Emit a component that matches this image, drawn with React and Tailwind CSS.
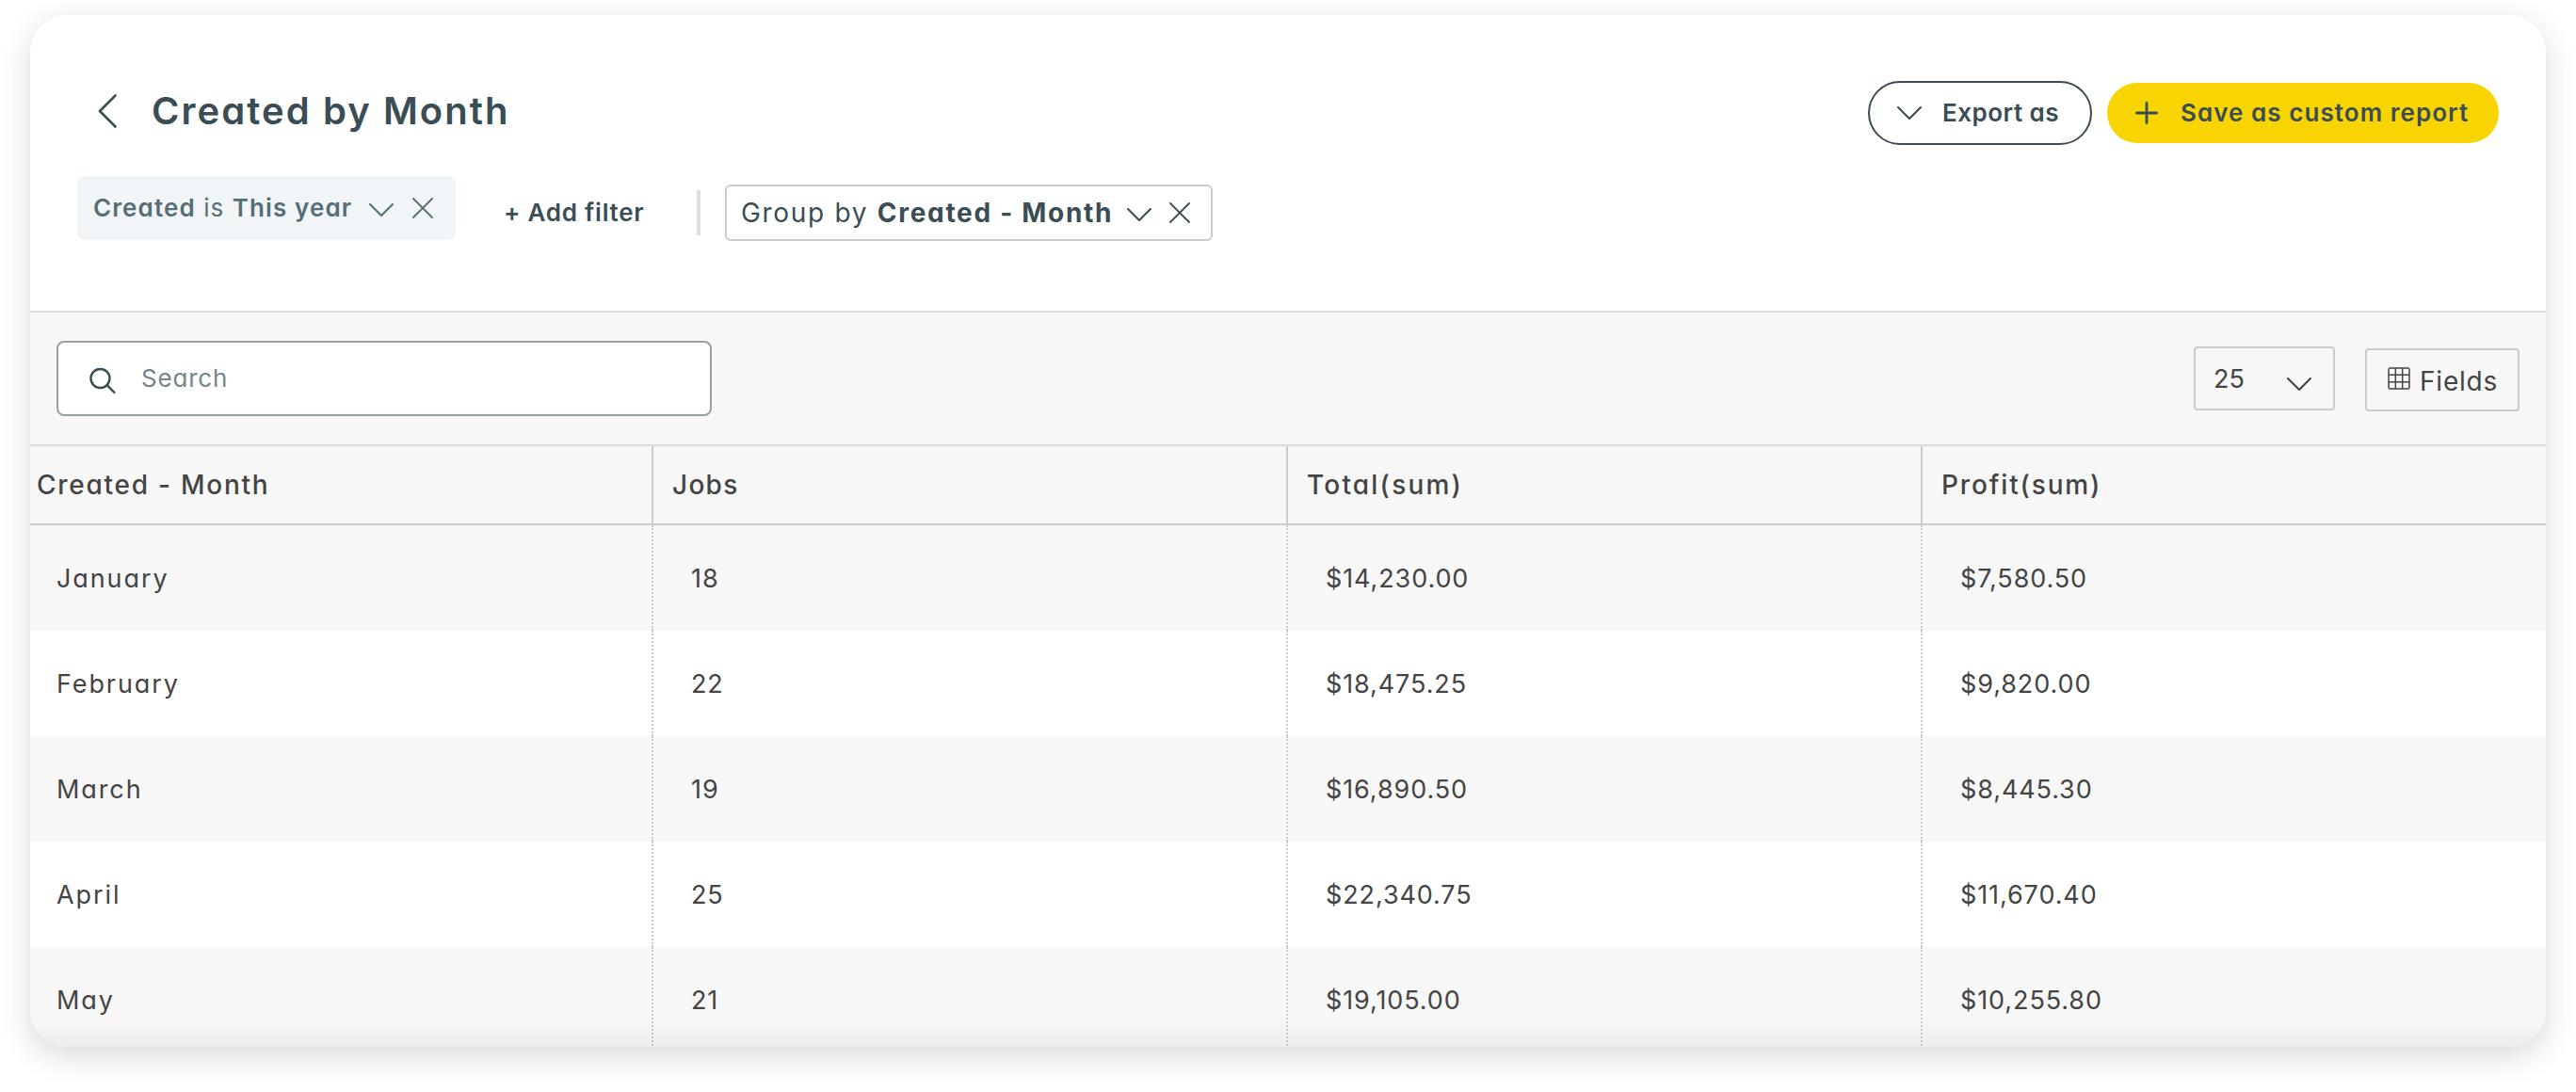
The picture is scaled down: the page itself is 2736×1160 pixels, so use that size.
const rows = [
    { month: 'January', jobs: '18', total: '$14,230.00', profit: '$7,580.50' },
    { month: 'February', jobs: '22', total: '$18,475.25', profit: '$9,820.00' },
    { month: 'March', jobs: '19', total: '$16,890.50', profit: '$8,445.30' },
    { month: 'April', jobs: '25', total: '$22,340.75', profit: '$11,670.40' },
    { month: 'May', jobs: '21', total: '$19,105.00', profit: '$10,255.80' },
];

function ChevronDown({ className }) {
    return (
        <svg viewBox="0 0 28 16" className={className} fill="none" stroke="currentColor" strokeWidth="2" strokeLinecap="round" strokeLinejoin="round">
            <path d="M2 2l12 12L26 2" />
        </svg>
    );
}

function Close({ className }) {
    return (
        <svg viewBox="0 0 22 22" className={className} fill="none" stroke="currentColor" strokeWidth="1.8" strokeLinecap="round">
            <path d="M1 1l20 20M21 1L1 21" />
        </svg>
    );
}

function Header() {
    return (
        <header className="h-[316px] border-b-2 border-[#dcdcdc] text-[#3b4d54]">
            <div className="flex justify-between pt-[70px] pl-[72px] pr-[50px]">
                <div className="flex h-16 items-center">
                    <svg viewBox="0 0 20 36" className="h-9 w-5 shrink-0" fill="none" stroke="currentColor" strokeWidth="2.6" strokeLinecap="round" strokeLinejoin="round">
                        <path d="M18.500 1.500L2 18l16.500 16.500" />
                    </svg>
                    <h1 className="ml-[37px] text-[40px] font-semibold tracking-[2.05px]">Created by Month</h1>
                </div>
                <div className="flex items-center gap-4">
                    <button className="flex h-[68px] w-[238px] items-center rounded-full border-2 border-[#3b4d54] pl-[28px]">
                        <ChevronDown className="h-4 w-7 shrink-0" />
                        <span className="ml-[21px] text-[26px] font-semibold tracking-[0.5px]">Export as</span>
                    </button>
                    <button className="flex h-16 w-[416px] items-center rounded-full bg-[#f9d403] pl-[30px]">
                        <svg viewBox="0 0 24 24" className="size-6 shrink-0" stroke="currentColor" strokeWidth="2.8" strokeLinecap="round">
                            <path d="M12 1.400v21.200M1.400 12h21.200" />
                        </svg>
                        <span className="ml-6 text-[26px] font-semibold tracking-[1.05px]">Save as custom report</span>
                    </button>
                </div>
            </div>

            {/* filters */}
            <div className="mt-[33px] flex items-start pl-[50px]">
                <div className="flex h-[68px] w-[402px] items-center rounded-lg bg-[#f1f5f7] pl-[17px] text-[#566e76]">
                    <span className="w-[292px] text-[26px] tracking-[1.1px] whitespace-nowrap">
                        <b className="font-semibold">Created</b> is <b className="font-semibold">This year</b>
                    </span>
                    <ChevronDown className="mt-1 h-4 w-7 shrink-0" />
                    <Close className="ml-[19px] size-[22px] shrink-0" />
                </div>
                <button className="mt-[9px] ml-[51px] flex h-[60px] w-[205px] items-center text-[26px] font-semibold tracking-[0.75px] whitespace-nowrap">+ Add filter</button>
                <div className="mt-[15px] h-12 w-1 bg-[#dce0e2]" />
                <div className="mt-[9px] ml-[26px] flex h-[60px] w-[518px] items-center rounded-md border-2 border-[#cccccc] pl-[15px]">
                    <span className="w-[409px] text-[28px] tracking-[1.7px] whitespace-nowrap">
                        Group by <b className="font-bold">Created - Month</b>
                    </span>
                    <ChevronDown className="mt-1 h-4 w-7 shrink-0" />
                    <Close className="ml-[18px] size-[22px] shrink-0" />
                </div>
            </div>
        </header>
    );
}

function Toolbar() {
    return (
        <div className="flex h-[142px] items-start border-b-2 border-[#dcdcdc] pt-[30px] pr-7 pl-7">
            <div className="flex h-20 w-[696px] items-center rounded-lg border-2 border-[#98a2a6] bg-white pl-8">
                <svg viewBox="0 0 30 30" className="mt-1 size-[30px] shrink-0 text-[#3b4d54]" fill="none" stroke="currentColor" strokeWidth="2.4" strokeLinecap="round">
                    <circle cx="12.500" cy="13" r="10" />
                    <path d="M19.700 20.200L27.500 28" />
                </svg>
                <span className="ml-[26px] text-[26px] tracking-[0.8px] text-[#75858b]">Search</span>
            </div>
            <div className="mt-[6px] ml-auto flex h-[68px] w-[150px] items-center rounded border-2 border-[#cccccc] pl-[19px]">
                <span className="w-[77px] text-[27px]">25</span>
                <ChevronDown className="mt-3 h-4 w-7 shrink-0" />
            </div>
            <button className="mt-2 ml-8 flex h-[67px] w-[164px] items-center rounded border-2 border-[#cccccc] pl-[22px]">
                <svg viewBox="0 0 24 24" className="-mt-1 size-6 shrink-0" fill="none" stroke="currentColor" strokeWidth="1.500">
                    <rect x="1" y="1" width="22" height="22" rx="2" />
                    <path d="M8.300 1v22M15.700 1v22M1 8.300h22M1 15.700h22" />
                </svg>
                <span className="mt-[3px] ml-[10px] text-[28px] tracking-[0.8px]">Fields</span>
            </button>
        </div>
    );
}

function Table() {
    return (
        <div className="text-[27px] tracking-[0.9px]">
            <div className="grid h-[84px] grid-cols-[660px_674px_674px_1fr] border-b-2 border-[#cccccc] text-[28px] font-medium">
                <div className="flex items-center pl-[7px] tracking-[1.75px]">Created - Month</div>
                <div className="flex items-center border-l-2 border-[#cccccc] pl-5 tracking-[1.3px]">Jobs</div>
                <div className="flex items-center border-l-2 border-[#cccccc] pl-5 tracking-[2.2px]">Total(sum)</div>
                <div className="flex items-center border-l-2 border-[#cccccc] pl-5 tracking-[1.85px]">Profit(sum)</div>
            </div>
            {rows.map((row) => (
                <div key={row.month} className="grid h-28 grid-cols-[660px_674px_674px_1fr] even:bg-[#f7f7f7] odd:bg-white">
                    <div className="flex items-center pl-7 tracking-[1.9px]">{row.month}</div>
                    <div className="flex items-center border-l-2 border-dotted border-[#cccccc] pl-10">{row.jobs}</div>
                    <div className="flex items-center border-l-2 border-dotted border-[#cccccc] pl-10">{row.total}</div>
                    <div className="flex items-center border-l-2 border-dotted border-[#cccccc] pl-10">{row.profit}</div>
                </div>
            ))}
        </div>
    );
}

export default function App() {
    return (
        <div className="h-[1160px] w-[2736px] overflow-hidden bg-white px-8 pt-4 font-['Inter',sans-serif] leading-none [font-feature-settings:'cv11']">
            <div className="rounded-[40px] shadow-[0_10px_32px_rgba(50,65,75,0.2)]">
                <main className="relative h-[1096px] overflow-hidden rounded-[40px] bg-white text-[#444444]">
                    <Header />
                    <div className="bg-[#f7f7f7]">
                        <Toolbar />
                        <Table />
                    </div>
                    {/* fade at the bottom edge */}
                    <div className="absolute inset-x-0 bottom-0 h-7 bg-linear-to-b from-transparent to-black/4" />
                </main>
            </div>
        </div>
    );
}
